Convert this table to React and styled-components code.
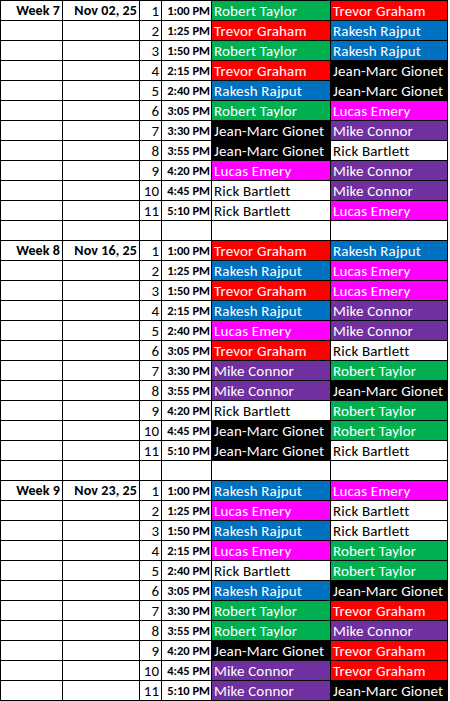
import React from 'react';
import styled, { createGlobalStyle } from 'styled-components';

const players = {
	'Robert Taylor': { bg: '#00b050', fg: '#ffffff' },
	'Trevor Graham': { bg: '#ff0000', fg: '#ffffff' },
	'Rakesh Rajput': { bg: '#0070c0', fg: '#ffffff' },
	'Jean-Marc Gionet': { bg: '#000000', fg: '#ffffff' },
	'Lucas Emery': { bg: '#ff00ff', fg: '#ffffff' },
	'Mike Connor': { bg: '#7030a0', fg: '#ffffff' },
	'Rick Bartlett': { bg: '#ffffff', fg: '#000000' }
};

const times = ['1:00 PM', '1:25 PM', '1:50 PM', '2:15 PM', '2:40 PM', '3:05 PM', '3:30 PM', '3:55 PM', '4:20 PM', '4:45 PM', '5:10 PM'];

const weeks = [
	{
		week: 'Week 7',
		date: 'Nov 02, 25',
		games: [
			['Robert Taylor', 'Trevor Graham'],
			['Trevor Graham', 'Rakesh Rajput'],
			['Robert Taylor', 'Rakesh Rajput'],
			['Trevor Graham', 'Jean-Marc Gionet'],
			['Rakesh Rajput', 'Jean-Marc Gionet'],
			['Robert Taylor', 'Lucas Emery'],
			['Jean-Marc Gionet', 'Mike Connor'],
			['Jean-Marc Gionet', 'Rick Bartlett'],
			['Lucas Emery', 'Mike Connor'],
			['Rick Bartlett', 'Mike Connor'],
			['Rick Bartlett', 'Lucas Emery']
		]
	},
	{
		week: 'Week 8',
		date: 'Nov 16, 25',
		games: [
			['Trevor Graham', 'Rakesh Rajput'],
			['Rakesh Rajput', 'Lucas Emery'],
			['Trevor Graham', 'Lucas Emery'],
			['Rakesh Rajput', 'Mike Connor'],
			['Lucas Emery', 'Mike Connor'],
			['Trevor Graham', 'Rick Bartlett'],
			['Mike Connor', 'Robert Taylor'],
			['Mike Connor', 'Jean-Marc Gionet'],
			['Rick Bartlett', 'Robert Taylor'],
			['Jean-Marc Gionet', 'Robert Taylor'],
			['Jean-Marc Gionet', 'Rick Bartlett']
		]
	},
	{
		week: 'Week 9',
		date: 'Nov 23, 25',
		games: [
			['Rakesh Rajput', 'Lucas Emery'],
			['Lucas Emery', 'Rick Bartlett'],
			['Rakesh Rajput', 'Rick Bartlett'],
			['Lucas Emery', 'Robert Taylor'],
			['Rick Bartlett', 'Robert Taylor'],
			['Rakesh Rajput', 'Jean-Marc Gionet'],
			['Robert Taylor', 'Trevor Graham'],
			['Robert Taylor', 'Mike Connor'],
			['Jean-Marc Gionet', 'Trevor Graham'],
			['Mike Connor', 'Trevor Graham'],
			['Mike Connor', 'Jean-Marc Gionet']
		]
	}
];

export default function App() {
	return (
		<>
			<GlobalStyle />
			<Sheet>
				{weeks.map((w, wi) => (
					<React.Fragment key={w.week}>
						{wi > 0 && (
							<>
								<Cell />
								<Cell />
								<Cell />
								<Cell />
								<Cell />
								<Cell />
							</>
						)}
						{w.games.map((game, i) => (
							<React.Fragment key={i}>
								<Label>{i === 0 ? w.week : ''}</Label>
								<Label>{i === 0 ? w.date : ''}</Label>
								<Cell>{i + 1}</Cell>
								<Time>{times[i]}</Time>
								{game.map((name, j) => (
									<Player key={j} bg={players[name].bg} fg={players[name].fg}>
										{name}
									</Player>
								))}
							</React.Fragment>
						))}
					</React.Fragment>
				))}
			</Sheet>
		</>
	);
}

const GlobalStyle = createGlobalStyle`
	body {
		margin: 0;
		background: #ffffff;
		font-family: Carlito, 'Liberation Sans', Arial, sans-serif;
	}
`;

const Sheet = styled.div`
	display: grid;
	grid-template-columns: 61px 76px 21px 49px 118px 116px;
	grid-auto-rows: 19px;
	gap: 1px;
	padding: 1px;
	width: max-content;
	background: #000000;
`;

const Cell = styled.div`
	background: #ffffff;
	color: #000000;
	font-size: 15px;
	line-height: 20px;
	text-align: right;
	padding: 0 2px 0 1px;
	white-space: nowrap;
	overflow: hidden;
`;

const Label = styled(Cell)`
	font-size: 14px;
	font-weight: 700;
	letter-spacing: 0.1px;
`;

const Time = styled(Cell)`
	font-size: 12.5px;
	font-weight: 700;
	padding: 0 1px 0 0;
`;

const Player = styled.div`
	background: ${({ bg }) => bg};
	color: ${({ fg }) => fg};
	font-size: 15px;
	line-height: 20px;
	letter-spacing: 0.15px;
	padding: 0 1px 0 2px;
	white-space: nowrap;
	overflow: hidden;
`;
